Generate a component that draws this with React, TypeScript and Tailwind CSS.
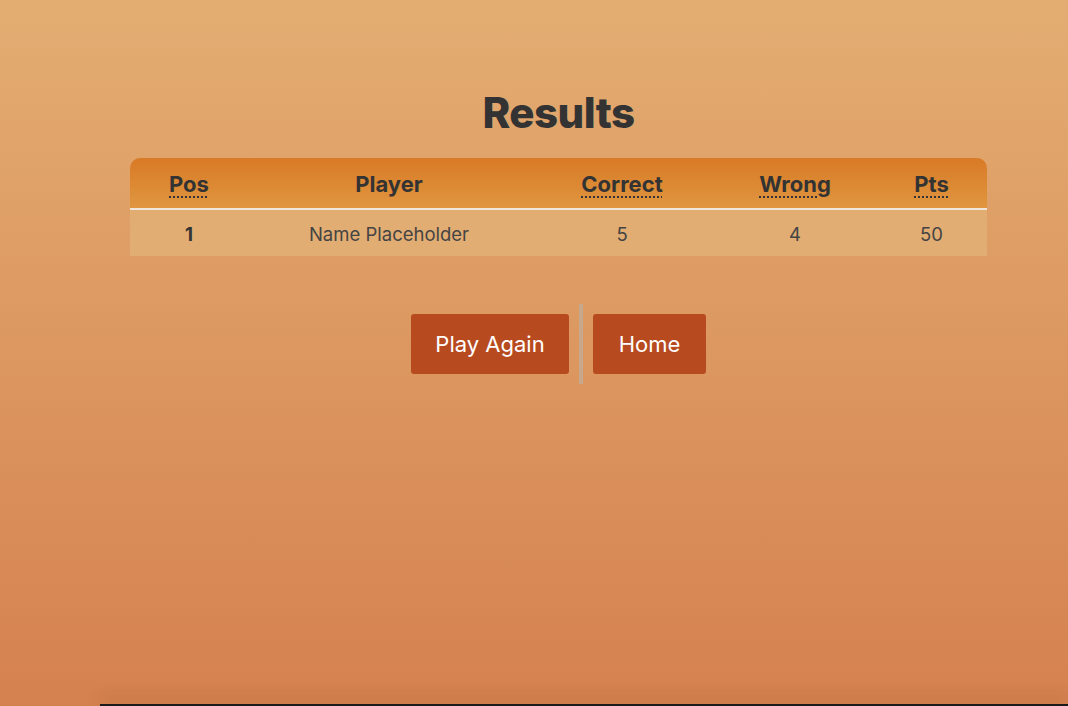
import React from "react";

const cols = [
  { key: "pos", label: "Pos", abbr: true, w: "w-[118px]" },
  { key: "player", label: "Player", abbr: false, w: "w-[282px]" },
  { key: "correct", label: "Correct", abbr: true, w: "w-[184px]" },
  { key: "wrong", label: "Wrong", abbr: true, w: "w-[162px]" },
  { key: "pts", label: "Pts", abbr: true, w: "w-[111px]" },
];

const rows = [{ pos: 1, player: "Name Placeholder", correct: 5, wrong: 4, pts: 50 }];

export default function App() {
  return (
    <div
      className="relative w-full h-[706px] overflow-hidden bg-gradient-to-b from-[#e3ad72] to-[#d5814f] text-[#333] pt-[90px] pl-[49px]"
      style={{ fontFamily: "Inter, 'Noto Sans', sans-serif" }}
    >
      <h1 className="text-center text-[42px] leading-[46px] font-extrabold tracking-[-0.5px]">Results</h1>

      <div className="mx-auto mt-[22px] w-[857px]">
        <table className="w-full border-collapse table-fixed">
          <thead>
            <tr className="bg-gradient-to-b from-[#d97a26] to-[#e0963f]">
              {cols.map((c, i) => (
                <th
                  key={c.key}
                  className={`${c.w} h-[51px] pt-[2px] text-[22px] font-bold text-center ${i === 0 ? "rounded-tl-[10px]" : ""} ${
                    i === cols.length - 1 ? "rounded-tr-[10px]" : ""
                  }`}
                >
                  {c.abbr ? (
                    <abbr className="underline decoration-dotted decoration-[2px] underline-offset-[5px]">{c.label}</abbr>
                  ) : (
                    c.label
                  )}
                </th>
              ))}
            </tr>
          </thead>
          <tbody>
            {rows.map((r) => (
              <tr key={r.pos} className="bg-[#e2ad72] border-t-2 border-[#f1e6da] text-[18.5px]">
                <td className="h-[47px] pt-[3px] text-center font-bold">{r.pos}</td>
                <td className="pt-[3px] text-center text-[#444]">{r.player}</td>
                <td className="pt-[3px] text-center text-[#444]">{r.correct}</td>
                <td className="pt-[3px] text-center text-[#444]">{r.wrong}</td>
                <td className="pt-[3px] text-center text-[#444]">{r.pts}</td>
              </tr>
            ))}
          </tbody>
        </table>
      </div>

      <div className="mt-[48px] flex justify-center items-center">
        <button className="w-[158px] h-[60px] rounded-[3px] bg-[#b84a1f] text-white text-[22px]">Play Again</button>
        <div className="mx-[10px] w-[4px] h-[80px] bg-[#c8a88c]" />
        <button className="w-[113px] h-[60px] rounded-[3px] bg-[#b84a1f] text-white text-[22px]">Home</button>
      </div>

      <div className="absolute left-[100px] right-0 bottom-0 h-[2px] bg-[#1a1a1a] shadow-[0_-6px_14px_rgba(80,40,20,0.35)]" />
    </div>
  );
}
